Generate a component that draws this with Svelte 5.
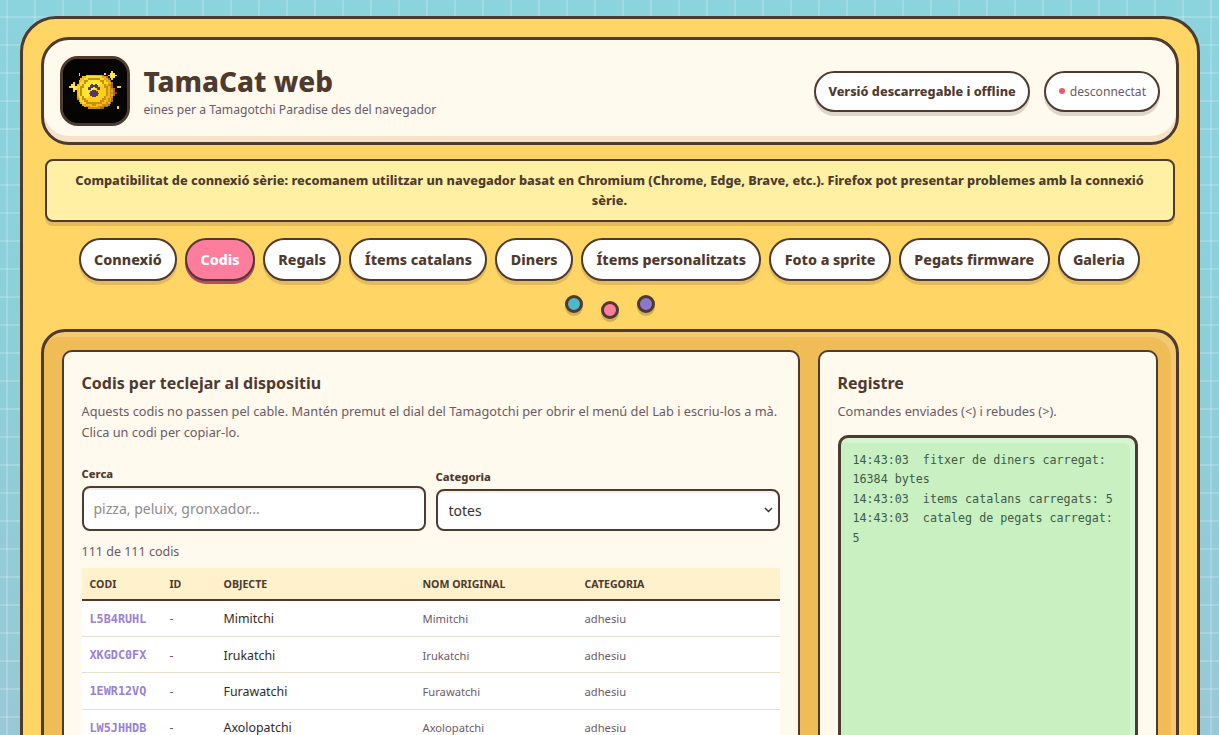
<script>
  const tabs = ['Connexió','Codis','Regals','Ítems catalans','Diners','Ítems personalitzats','Foto a sprite','Pegats firmware','Galeria'];
  const rows = [
    ['L5B4RUHL','Mimitchi'],['XKGDC0FX','Irukatchi'],['1EWR12VQ','Furawatchi'],['LW5JHHDB','Axolopatchi'],['Q7TN2KPA','Kuchipatchi']
  ];
  const log = ['14:43:03  fitxer de diners carregat: 16384 bytes','14:43:03  items catalans carregats: 5','14:43:03  cataleg de pegats carregat: 5'];

  function pixelColor(x, y) {
    const cx = 15.5, cy = 16.2;
    const dx = x - cx, dy = y - cy;
    const d = Math.hypot(dx, dy);
    const back = Math.hypot(x - cx - 1.6, y - cy - 0.4);
    if (d <= 9.2) {
      if (d > 8.1) return dx + dy > 4 ? '#c98a12' : dx + dy < -6 ? '#f5bc1a' : '#eaa917';
      if (d > 6.9) return dx + dy > 3 ? '#f0b81c' : '#ffdc2a';
      if (d > 5.8) return '#c98f0e';
      return dx + dy < 0 ? '#ffe534' : '#fdcf16';
    }
    if (back <= 9.2) return back > 8.3 ? '#a86c10' : (y % 2 ? '#d0901a' : '#eab022');
    return null;
  }
  function isPaw(x, y) {
    const dx = x + 0.5 - 32, dy = y + 0.5 - 33;
    const toes = [[-4.6,-2.4],[-1.9,-5],[1.9,-5],[4.6,-2.4]];
    if (toes.some(([a, b]) => Math.hypot(dx - a, dy - b) < 1.8)) return true;
    return Math.hypot(dx / 4.6, (dy - 2.6) / 3.4) < 1;
  }
  const stars = [
    [25,8,'#fff07a'],[24,8,'#ffe23c'],[26,8,'#ffe23c'],[25,7,'#ffe23c'],[25,9,'#ffe23c'],[23,8,'#ffd321'],[27,8,'#ffd321'],[25,6,'#ffd321'],[25,10,'#ffd321'],[24,7,'#ffe23c'],[26,7,'#ffe23c'],[24,9,'#ffe23c'],[26,9,'#ffe23c'],
    [5,14,'#fff07a'],[4,14,'#ffe23c'],[6,14,'#ffe23c'],[5,13,'#ffe23c'],[5,15,'#ffe23c'],[3,14,'#ffd321'],[7,14,'#ffd321'],[5,12,'#ffd321'],[5,16,'#ffd321'],[4,13,'#ffe23c'],[6,15,'#ffe23c'],
    [8,7,'#ffd321'],[8,8,'#ffd321'],[21,7,'#ffd321'],[28,14,'#ffd321'],[29,14,'#ffd321'],[28,24,'#ffd321'],[28,25,'#ffd321'],[7,20,'#c98a12'],[27,17,'#b02818']
  ];
  const pixels = [];
  for (let y = 0; y < 33; y++) for (let x = 0; x < 33; x++) {
    const c = pixelColor(x, y);
    if (c) pixels.push([x * 2, y * 2, c, 2]);
  }
  for (const s of stars) pixels.push([s[0] * 2, s[1] * 2, s[2], 2]);
  for (let y = 20; y < 46; y++) for (let x = 20; x < 46; x++) {
    if (isPaw(x, y)) pixels.push([x, y, '#4d3b63', 1]);
  }
</script>

<div class="shell">
  <header class="top">
    <div class="logo">
      <svg viewBox="0 0 66 66" width="64" height="64" shape-rendering="crispEdges" aria-hidden="true">
        <rect width="66" height="66" fill="#050403" />
        {#each pixels as p}
          <rect x={p[0]} y={p[1]} width={p[3]} height={p[3]} fill={p[2]} />
        {/each}
      </svg>
    </div>
    <div class="brand">
      <h1>TamaCat web</h1>
      <p>eines per a Tamagotchi Paradise des del navegador</p>
    </div>
    <div class="actions">
      <button class="pill strong">Versió descarregable i offline</button>
      <div class="pill status"><span class="dot"></span>desconnectat</div>
    </div>
  </header>

  <div class="notice">Compatibilitat de connexió sèrie: recomanem utilitzar un navegador basat en Chromium (Chrome, Edge, Brave, etc.). Firefox pot presentar problemes amb la connexió sèrie.</div>

  <nav class="tabs">
    {#each tabs as t}
      <button class="tab" class:active={t === 'Codis'}>{t}</button>
    {/each}
  </nav>

  <div class="beads">
    <span class="bead teal"></span>
    <span class="bead pink"></span>
    <span class="bead violet"></span>
  </div>

  <main class="board">
    <section class="card codes">
      <h2>Codis per teclejar al dispositiu</h2>
      <p class="desc">Aquests codis no passen pel cable. Mantén premut el dial del Tamagotchi per obrir el menú del Lab i escriu-los a mà. Clica un codi per copiar-lo.</p>
      <div class="filters">
        <label class="field">
          <span>Cerca</span>
          <input type="text" placeholder="pizza, peluix, gronxador..." />
        </label>
        <label class="field">
          <span>Categoria</span>
          <div class="select-wrap">
            <select><option>totes</option></select>
            <svg class="chev" viewBox="0 0 9 6" width="9" height="6" aria-hidden="true"><path d="M1 1 L4.5 4.5 L8 1" fill="none" stroke="#33302e" stroke-width="1.4" /></svg>
          </div>
        </label>
      </div>
      <p class="count">111 de 111 codis</p>
      <table>
        <thead>
          <tr><th class="c1">Codi</th><th class="c2">ID</th><th class="c3">Objecte</th><th class="c4">Nom original</th><th>Categoria</th></tr>
        </thead>
        <tbody>
          {#each rows as r}
            <tr>
              <td class="code">{r[0]}</td>
              <td class="id">-</td>
              <td>{r[1]}</td>
              <td class="muted">{r[1]}</td>
              <td class="muted">adhesiu</td>
            </tr>
          {/each}
        </tbody>
      </table>
    </section>

    <aside class="card register">
      <h2>Registre</h2>
      <p class="desc">Comandes enviades (&lt;) i rebudes (&gt;).</p>
      <div class="log">
        {#each log as line}
          <div>{line}</div>
        {/each}
      </div>
    </aside>
  </main>
</div>

<style>
  :global(html), :global(body) { margin: 0; }
  :global(body) {
    font-family: "Noto Sans", "Open Sans", sans-serif;
    color: #4f3a2f;
    background-color: #8bd3dd;
    background-image:
      linear-gradient(rgba(255,255,255,.18) 2px, transparent 2px),
      linear-gradient(90deg, rgba(255,255,255,.18) 2px, transparent 2px),
      linear-gradient(#8bd3dd 0, #8ccfd9 350px, #99c8d6 735px);
    background-size: 28px 28px, 28px 28px, 100% 100%;
    background-position: 0 16px, 6px 0, 0 0;
    overflow-x: hidden;
  }
  * { box-sizing: border-box; }
  h1, h2, p { margin: 0; }

  .shell {
    width: 1180px;
    margin: 16px auto;
    padding: 18px;
    background: #ffd566;
    border: 3px solid #4f3a2f;
    border-radius: 36px;
  }

  .top {
    display: flex;
    align-items: center;
    gap: 14px;
    height: 108px;
    padding: 0 16px;
    background: #fff9ee;
    border: 3px solid #4f3a2f;
    border-radius: 28px;
    box-shadow: inset 0 -6px 0 #f5e3c8;
  }
  .logo {
    flex: none;
    width: 70px;
    height: 70px;
    border: 3px solid #4f3a2f;
    border-radius: 18px;
    overflow: hidden;
    background: #050403;
  }
  .logo svg { display: block; }
  .brand { flex: 1; min-width: 0; }
  h1 { font-size: 27.9px; line-height: 35px; font-weight: 800; }
  .brand p { margin-top: 2px; font-size: 12.15px; line-height: 18px; color: #6b5a66; }
  .actions { display: flex; align-items: center; gap: 14px; }
  .pill {
    height: 41px;
    display: inline-flex;
    align-items: center;
    padding: 0 11.5px;
    background: #fff;
    border: 2px solid #4f3a2f;
    border-radius: 21px;
    box-shadow: 0 4px 0 rgba(79,58,47,.18);
    font-family: inherit;
    color: #4f3a2f;
  }
  .strong { padding: 0 12.5px; font-size: 12.7px; font-weight: 800; }
  .status { font-size: 12.1px; color: #6b5a66; }
  .dot { width: 6px; height: 6px; margin: 0 5px 0 1px; border-radius: 50%; background: #ef5a6f; }

  .notice {
    margin: 14px 4px 0;
    height: 63px;
    padding: 6px 20px;
    display: flex;
    align-items: center;
    text-align: center;
    justify-content: center;
    background: #fff0a3;
    border: 2px solid #4f3a2f;
    border-radius: 8px;
    box-shadow: 0 4px 0 rgba(79,58,47,.16);
    font-size: 12.72px;
    line-height: 19.5px;
    font-weight: 800;
  }

  .tabs {
    display: flex;
    justify-content: center;
    gap: 8px;
    margin-top: 16px;
  }
  .tab {
    height: 43px;
    padding: 0 13.4px;
    background: #fff;
    border: 2px solid #4f3a2f;
    border-radius: 22px;
    box-shadow: 0 4px 0 rgba(79,58,47,.16);
    font-family: inherit;
    font-size: 14.3px;
    font-weight: 800;
    color: #4f3a2f;
  }
  .tab.active { background: #ff7d9c; color: #fff; box-shadow: 0 3px 0 #b94a66; }

  .beads {
    display: flex;
    justify-content: center;
    gap: 18px;
    height: 48px;
    padding-top: 14px;
  }
  .bead {
    width: 18px;
    height: 18px;
    border: 3px solid #4f3a2f;
    border-radius: 50%;
    box-shadow: 0 3px 0 rgba(79,58,47,.25);
  }
  .teal { background: #4cb8c8; }
  .pink { background: #ff7d9c; margin-top: 6px; }
  .violet { background: #8a78cf; }

  .board {
    display: grid;
    grid-template-columns: 738px 340px;
    gap: 18px;
    padding: 18px;
    min-height: 560px;
    background: #f0bc55;
    border: 3px solid #4f3a2f;
    border-radius: 24px;
    box-shadow: inset -5px 5px 0 #f4c872;
  }
  .card {
    padding: 18px;
    background: #fff9ee;
    border: 2px solid #4f3a2f;
    border-radius: 10px;
  }
  h2 { font-size: 16px; line-height: 26px; font-weight: 700; }
  .desc { margin-top: 5px; font-size: 12.75px; line-height: 21px; color: #6b5a66; }

  .filters {
    display: grid;
    grid-template-columns: 1fr 1fr;
    gap: 10px;
    align-items: end;
    margin-top: 22px;
  }
  .field { display: block; }
  .field span { display: block; margin-bottom: 3px; font-size: 11.2px; line-height: 18px; font-weight: 800; }
  .select-wrap { position: relative; }
  .chev { position: absolute; right: 7px; top: 18px; }
  input, select {
    display: block;
    width: 100%;
    background: #fff;
    border: 2px solid #4f3a2f;
    border-radius: 8px;
    font-family: inherit;
    font-size: 14px;
    color: #33302e;
    outline: none;
    box-shadow: inset 0 2px 0 #f2efec;
  }
  input { height: 45px; padding: 0 10px; }
  input::placeholder { color: #8f8a8a; }
  select { height: 42px; padding: 0 11px; appearance: none; }

  .count { margin-top: 12px; font-size: 12.5px; line-height: 17px; color: #6b5a66; }

  table { width: 100%; margin-top: 8px; border-collapse: collapse; table-layout: fixed; background: #fff; font-size: 12.4px; }
  th {
    height: 32px;
    padding: 0 8px;
    background: #fff1cc;
    border-bottom: 2px solid #4f3a2f;
    font-size: 10.6px;
    font-weight: 700;
    text-align: left;
    text-transform: uppercase;
  }
  .c1 { width: 80px; } .c2 { width: 54px; } .c3 { width: 199px; } .c4 { width: 162px; }
  td { height: 36.4px; padding: 1px 8px 0; border-bottom: 1px solid #e8dfcf; color: #2f2b29; }
  td.muted { font-size: 11.2px; color: #6b5a66; }
  td.id { color: #6b5a66; }
  td.code { font-family: "DejaVu Sans Mono", monospace; font-size: 11.8px; font-weight: 700; color: #9a80d6; }

  .log {
    margin-top: 13px;
    height: 400px;
    padding: 13px 12px;
    background: #c8f0c0;
    border: 3px solid #4f3a2f;
    border-radius: 10px;
    box-shadow: inset -5px 5px 0 #d5f4d0;
    font-family: "DejaVu Sans Mono", monospace;
    font-size: 11.7px;
    line-height: 19.4px;
    color: #3e5a4a;
    white-space: pre-wrap;
  }
</style>
